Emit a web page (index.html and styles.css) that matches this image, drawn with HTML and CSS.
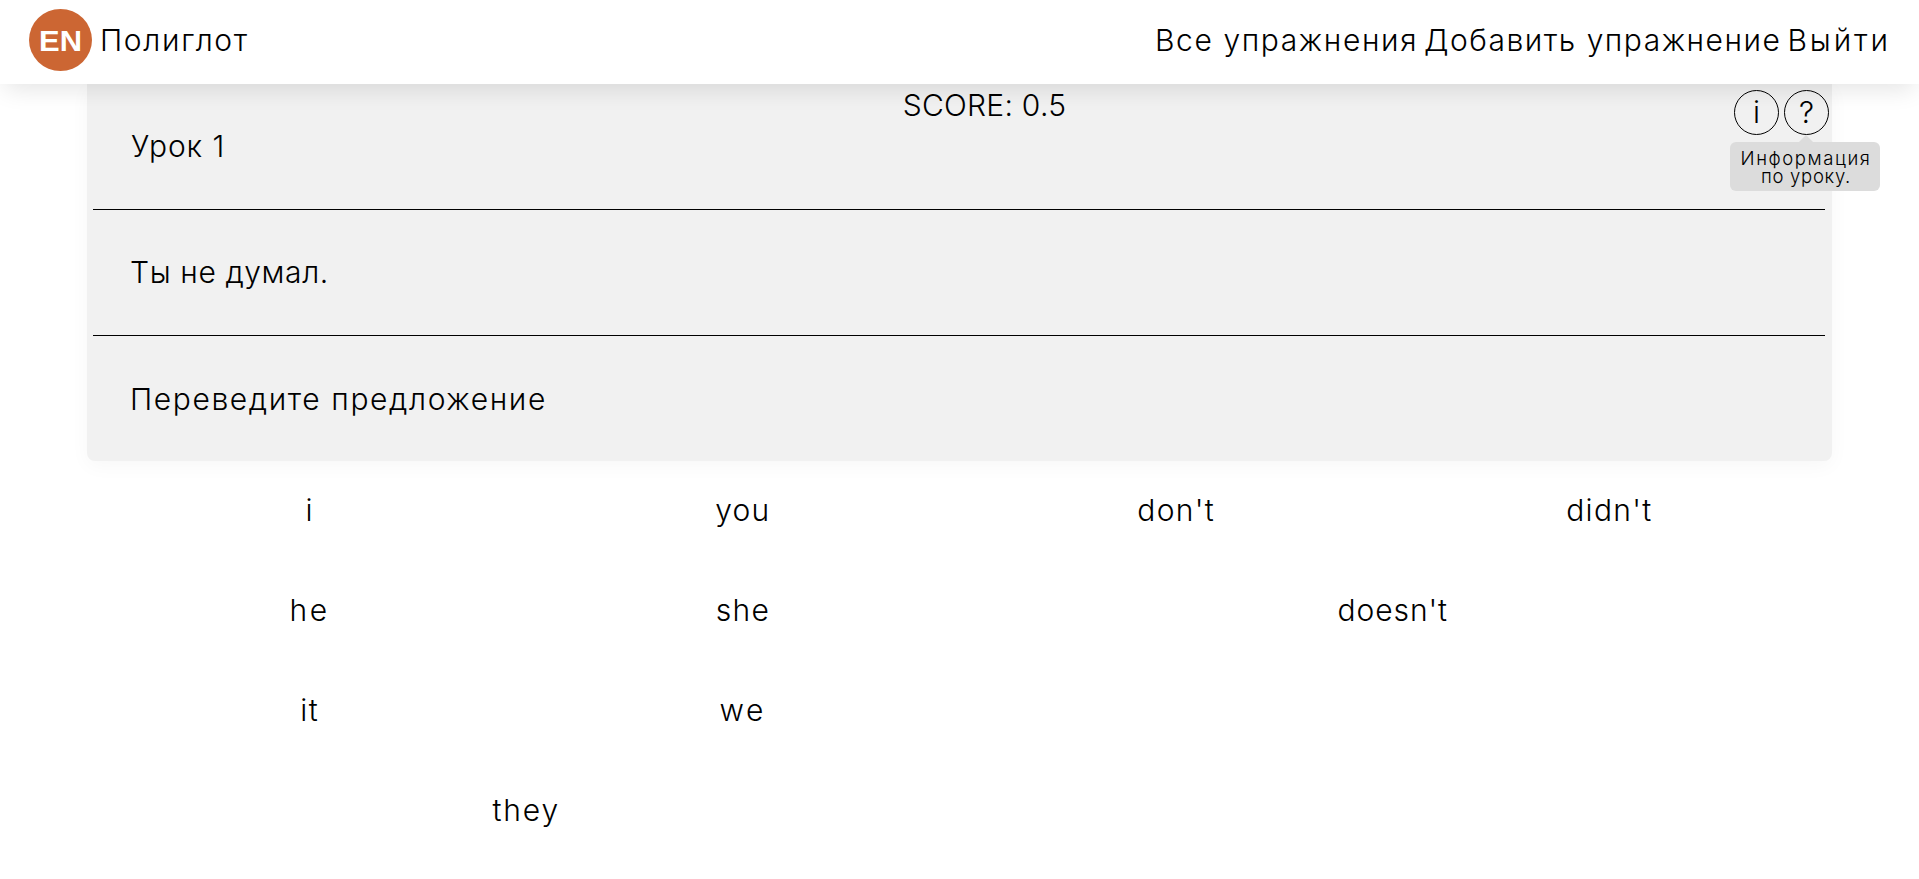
FILE: index.html
```html
<!DOCTYPE html>
<html lang="ru">
<head>
<meta charset="utf-8">
<title>Полиглот</title>
<link rel="stylesheet" href="styles.css">
</head>
<body>
<header class="header">
  <a class="brand">
    <svg class="brand-logo" width="64" height="64" viewBox="0 0 64 64">
      <ellipse cx="31.5" cy="32" rx="31.5" ry="31" fill="#cc6633"/>
      <text class="brand-mark" x="10" y="43" textLength="43" lengthAdjust="spacingAndGlyphs">EN</text>
    </svg>
    <span class="brand-name">Полиглот</span>
  </a>
  <nav class="nav">
    <a class="nav-all">Все упражнения</a>
    <a class="nav-add">Добавить упражнение</a>
    <a class="nav-exit">Выйти</a>
  </nav>
</header>
<main class="page">
  <section class="card">
    <div class="row row-title">
      <div class="lesson">Урок 1</div>
      <div class="score">SCORE: 0.5</div>
      <div class="help">
        <span class="round">i</span>
        <span class="round">?<span class="tip"><span class="tip-a">Информация</span><span class="tip-b">по уроку.</span></span></span>
      </div>
    </div>
    <div class="row row-sentence">Ты не думал.</div>
    <div class="row row-task">Переведите предложение</div>
  </section>
  <section class="words">
    <div class="word">i</div>
    <div class="word">you</div>
    <div class="word">don't</div>
    <div class="word">didn't</div>
    <div class="word w-short">he</div>
    <div class="word">she</div>
    <div class="word w-wide w-doesnt">doesn't</div>
    <div class="word">it</div>
    <div class="word w-short">we</div>
    <div class="word w-wide w-they w-new">they</div>
  </section>
</main>
</body>
</html>
```
FILE: styles.css
```css
* { box-sizing: border-box; }
body {
  margin: 0;
  background: #fff;
  color: #000;
  font: 300 30px/40px Inter, sans-serif;
  overflow: hidden;
}
.header {
  position: relative;
  z-index: 2;
  display: flex;
  justify-content: space-between;
  align-items: center;
  height: 84px;
  padding: 0 28px 5px 29px;
  background: #fff;
  box-shadow: 0 10px 25px -5px rgba(0, 0, 0, .11);
}
.brand { display: flex; align-items: center; gap: 7px; }
.brand-logo { display: block; }
.brand-mark { font: 700 30px "Liberation Sans", sans-serif; fill: #fff; }
.brand-name { letter-spacing: 1.65px; }
.nav { display: flex; gap: 6px; }
.nav-all { letter-spacing: 1.6px; }
.nav-add { letter-spacing: 1.5px; }
.nav-exit { letter-spacing: 2.9px; }
.page { width: 1745px; margin: 0 0 0 87px; }
.card {
  height: 377px;
  padding: 0 7px 0 6px;
  background: #f1f1f1;
  border-radius: 0 0 8px 8px;
  box-shadow: 0 5px 20px rgba(0, 0, 0, .035);
}
.row { height: 126px; padding: 42px 37px 0 37px; border-bottom: 1px solid #000; }
.row-title {
  display: grid;
  grid-template-columns: 1fr auto 1fr;
  padding: 0 0 0 38px;
}
.lesson { padding-top: 42px; letter-spacing: .9px; }
.score { letter-spacing: .25px; padding: 1px 0 0 13px; }
.help {
  display: flex;
  justify-content: flex-end;
  gap: 5px;
  padding-top: 6px;
  margin-right: -4px;
}
.round {
  position: relative;
  width: 45px;
  height: 45px;
  border: 1.5px solid #000;
  border-radius: 50%;
  line-height: 42px;
  text-align: center;
}
.tip {
  position: absolute;
  top: 51px;
  left: -55px;
  display: flex;
  flex-direction: column;
  align-items: center;
  width: 150px;
  height: 49px;
  padding: 7px 0 0 2px;
  border-radius: 6px;
  background: #dcdcdc;
  font-size: 18.5px;
  line-height: 18px;
}
.tip::before {
  content: "";
  position: absolute;
  top: -7px;
  left: 69px;
  border: 7px solid transparent;
  border-top: 0;
  border-bottom-color: #dcdcdc;
}
.tip-a { letter-spacing: 1.6px; }
.tip-b { letter-spacing: .7px; }
.row-sentence { letter-spacing: .6px; }
.row-task { letter-spacing: 1.6px; border-bottom: 0; padding-top: 43px; }
.words {
  display: grid;
  grid-template-columns: repeat(4, 1fr);
  grid-auto-rows: 100px;
  padding: 0 6px;
}
.word { line-height: 99px; text-align: center; letter-spacing: 1.3px; }
.w-short { letter-spacing: 2.7px; }
.w-wide { grid-column: span 2; }
.w-doesnt { letter-spacing: .9px; }
.w-they { letter-spacing: 1.9px; }
.w-new { grid-column: 1 / 3; }
```
